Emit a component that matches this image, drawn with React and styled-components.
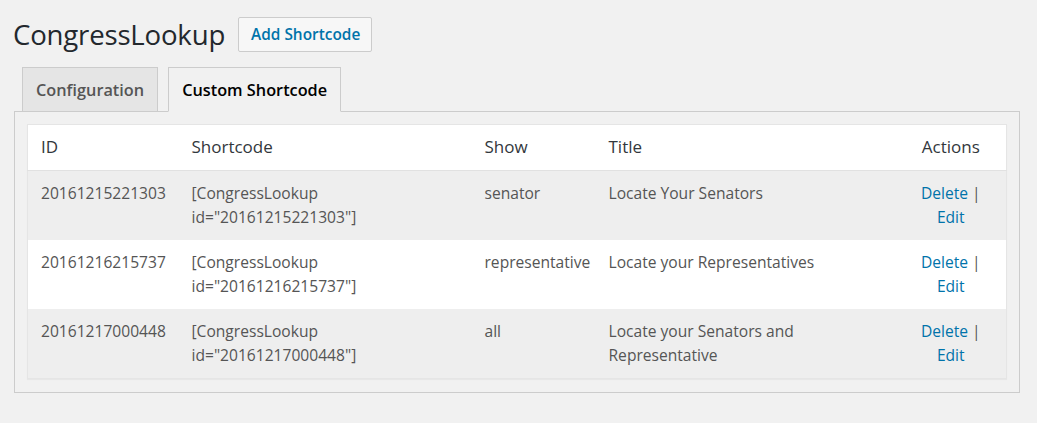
import React from "react";
import styled, { createGlobalStyle } from "styled-components";

const Global = createGlobalStyle`
  html, body { margin: 0; padding: 0; background: #f1f1f1; }
  body { font-family: "Open Sans", "Noto Sans", sans-serif; color: #444; }
  * { box-sizing: border-box; }
`;

const Wrap = styled.div`
  padding: 17px 18px 30px 13px;
`;

const TitleRow = styled.div`
  display: flex;
  align-items: center;
  gap: 13px;
  height: 35px;
`;

const Title = styled.h1`
  margin: 0;
  font-size: 27.6px;
  font-weight: 400;
  color: #23282d;
  line-height: 35px;
  letter-spacing: -0.2px;
`;

const ActionButton = styled.a`
  display: inline-flex;
  align-items: center;
  height: 35px;
  padding: 0 11px 0 12px;
  border: 1px solid #ccc;
  border-radius: 2px;
  background: #f7f7f7;
  color: #0073aa;
  font-size: 15.4px;
  font-weight: 600;
  text-decoration: none;
`;

const TabBar = styled.div`
  display: flex;
  gap: 10px;
  margin: 15px 0 -1px 9px;
  position: relative;
  z-index: 1;
`;

const Tab = styled.div`
  height: 45px;
  display: flex;
  align-items: center;
  padding: 0 13px;
  border: 1px solid #ccc;
  border-bottom-color: ${(p) => (p.$active ? "#f1f1f1" : "#ccc")};
  background: ${(p) => (p.$active ? "#f1f1f1" : "#e5e5e5")};
  color: ${(p) => (p.$active ? "#000" : "#555")};
  font-size: 16.3px;
  font-weight: 600;
`;

const Panel = styled.div`
  margin-left: 1px;
  width: 1006px;
  border: 1px solid #ccc;
  padding: 12px 12px 13px 12px;
  background: #f1f1f1;
`;

const Table = styled.table`
  width: 979px;
  border-collapse: collapse;
  table-layout: fixed;
  border: 1px solid #e5e5e5;
  box-shadow: 0 1px 1px rgba(0, 0, 0, 0.04);
  background: #fff;
`;

const Th = styled.th`
  text-align: ${(p) => p.$align || "left"};
  font-weight: 400;
  font-size: 17px;
  color: #32373c;
  padding: 10px 13px 11px 13px;
  line-height: 24px;
  border-bottom: 1px solid #e1e1e1;
`;

const Row = styled.tr`
  background: ${(p) => (p.$striped ? "#eeeeee" : "#fff")};
`;

const Td = styled.td`
  text-align: ${(p) => p.$align || "left"};
  vertical-align: top;
  font-size: 15.6px;
  color: #555;
  padding: 10px 13px 11px 13px;
  line-height: 24px;
`;

const Link = styled.a`
  color: #0073aa;
  text-decoration: none;
`;

const rows = [
  { id: "20161215221303", show: "senator", title: "Locate Your Senators" },
  { id: "20161216215737", show: "representative", title: "Locate your Representatives" },
  { id: "20161217000448", show: "all", title: "Locate your Senators and Representative" },
];

export default function App() {
  return (
    <>
      <Global />
      <Wrap>
        <TitleRow>
          <Title>CongressLookup</Title>
          <ActionButton href="#">Add Shortcode</ActionButton>
        </TitleRow>
        <TabBar>
          <Tab>Configuration</Tab>
          <Tab $active>Custom Shortcode</Tab>
        </TabBar>
        <Panel>
          <Table>
            <colgroup>
              <col style={{ width: 151 }} />
              <col style={{ width: 293 }} />
              <col style={{ width: 124 }} />
              <col style={{ width: 300 }} />
              <col style={{ width: 111 }} />
            </colgroup>
            <thead>
              <tr>
                <Th>ID</Th>
                <Th>Shortcode</Th>
                <Th>Show</Th>
                <Th>Title</Th>
                <Th $align="center">Actions</Th>
              </tr>
            </thead>
            <tbody>
              {rows.map((r, i) => (
                <Row key={r.id} $striped={i % 2 === 0}>
                  <Td>{r.id}</Td>
                  <Td>
                    [CongressLookup
                    <br />
                    id="{r.id}"]
                  </Td>
                  <Td>{r.show}</Td>
                  <Td>{r.title}</Td>
                  <Td $align="center">
                    <Link href="#">Delete</Link> | <Link href="#">Edit</Link>
                  </Td>
                </Row>
              ))}
            </tbody>
          </Table>
        </Panel>
      </Wrap>
    </>
  );
}
